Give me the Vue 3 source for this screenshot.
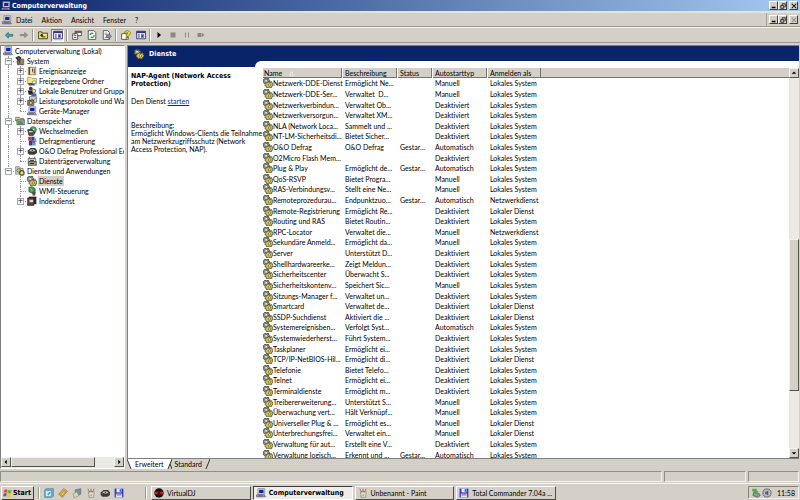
<script setup>
const menus = ['Datei', 'Aktion', 'Ansicht', 'Fenster', '?']

const tools = [
  { id: 'back', label: 'Zurück' },
  { id: 'forward', label: 'Vorwärts', sep: true },
  { id: 'up', label: 'Übergeordneter Ordner' },
  { id: 'panel', label: 'Konsolenstruktur', on: true, sep: true },
  { id: 'props', label: 'Eigenschaften' },
  { id: 'refresh', label: 'Aktualisieren' },
  { id: 'export', label: 'Liste exportieren', sep: true },
  { id: 'help', label: 'Hilfe' },
  { id: 'panel', label: 'Aktionsbereich', sep: true },
  { id: 'play', label: 'Dienst starten' },
  { id: 'stop', label: 'Dienst beenden' },
  { id: 'pause', label: 'Dienst anhalten' },
  { id: 'restart', label: 'Dienst neu starten' },
]

const tree = [
  { t: 'Computerverwaltung (Lokal)', i: 'pc', d: 0 },
  { t: 'System', i: 'tools', d: 1, b: '-' },
  { t: 'Ereignisanzeige', i: 'event', d: 2, b: '+' },
  { t: 'Freigegebene Ordner', i: 'share', d: 2, b: '+' },
  { t: 'Lokale Benutzer und Gruppe', i: 'users', d: 2, b: '+' },
  { t: 'Leistungsprotokolle und War', i: 'perf', d: 2, b: '+' },
  { t: 'Geräte-Manager', i: 'pc', d: 2, last: true },
  { t: 'Datenspeicher', i: 'store', d: 1, b: '-' },
  { t: 'Wechselmedien', i: 'media', d: 2, b: '+' },
  { t: 'Defragmentierung', i: 'defrag', d: 2 },
  { t: 'O&O Defrag Professional Ed', i: 'disk', d: 2, b: '+' },
  { t: 'Datenträgerverwaltung', i: 'drives', d: 2, last: true },
  { t: 'Dienste und Anwendungen', i: 'apps', d: 1, b: '-', end: true },
  { t: 'Dienste', i: 'gears', d: 2, sel: true, tail: true },
  { t: 'WMI-Steuerung', i: 'wmi', d: 2, tail: true },
  { t: 'Indexdienst', i: 'book', d: 2, b: '+', last: true, tail: true },
]

const columns = ['Name', 'Beschreibung', 'Status', 'Autostarttyp', 'Anmelden als']
const M = 'Manuell'
const D = 'Deaktiviert'
const A = 'Automatisch'
const S = 'Lokales System'
const L = 'Lokaler Dienst'
const N = 'Netzwerkdienst'
const G = 'Gestar...'
const services = [
  ['Netzwerk-DDE-Dienst', 'Ermöglicht Ne...', '', M, S],
  ['Netzwerk-DDE-Ser...', 'Verwaltet  D...', '', M, S],
  ['Netzwerkverbindun...', 'Verwaltet Ob...', '', D, S],
  ['Netzwerkversorgun...', 'Verwaltet XM...', '', D, S],
  ['NLA (Network Loca...', 'Sammelt und ...', '', D, S],
  ['NT-LM-Sicherheitsdi...', 'Bietet Sicher...', '', D, S],
  ['O&O Defrag', 'O&O Defrag', G, A, S],
  ['O2Micro Flash Mem...', '', '', D, S],
  ['Plug & Play', 'Ermöglicht de...', G, A, S],
  ['QoS-RSVP', 'Bietet Progra...', '', M, S],
  ['RAS-Verbindungsv...', 'Stellt eine Ne...', '', M, S],
  ['Remoteprozedurau...', 'Endpunktzuo...', G, A, N],
  ['Remote-Registrierung', 'Ermöglicht Re...', '', D, L],
  ['Routing und RAS', 'Bietet Routin...', '', D, S],
  ['RPC-Locator', 'Verwaltet die...', '', M, N],
  ['Sekundäre Anmeld...', 'Ermöglicht da...', '', M, S],
  ['Server', 'Unterstützt D...', '', D, S],
  ['Shellhardwareerke...', 'Zeigt Meldun...', '', D, S],
  ['Sicherheitscenter', 'Überwacht S...', '', D, S],
  ['Sicherheitskontenv...', 'Speichert Sic...', '', M, S],
  ['Sitzungs-Manager f...', 'Verwaltet un...', '', D, S],
  ['Smartcard', 'Verwaltet de...', '', D, L],
  ['SSDP-Suchdienst', 'Aktiviert die ...', '', D, L],
  ['Systemereignisben...', 'Verfolgt Syst...', '', A, S],
  ['Systemwiederherst...', 'Führt System...', '', D, S],
  ['Taskplaner', 'Ermöglicht ei...', '', D, S],
  ['TCP/IP-NetBIOS-Hil...', 'Ermöglicht di...', '', D, L],
  ['Telefonie', 'Bietet Telefo...', '', D, S],
  ['Telnet', 'Ermöglicht ei...', '', D, S],
  ['Terminaldienste', 'Ermöglicht m...', '', D, S],
  ['Treibererweiterung...', 'Unterstützt S...', '', M, S],
  ['Überwachung vert...', 'Hält Verknüpf...', '', M, S],
  ['Universeller Plug & ...', 'Ermöglicht es...', '', M, L],
  ['Unterbrechungsfrei...', 'Verwaltet ein...', '', M, L],
  ['Verwaltung für aut...', 'Erstellt eine V...', '', D, S],
  ['Verwaltung logisch...', 'Erkennt und ...', G, A, S],
]

const quick = [
  { i: 'desktop', label: 'Desktop anzeigen' },
  { i: 'clip', label: 'Winamp' },
  { i: 'note', label: 'Editor' },
  { i: 'paint', label: 'Paint' },
  { i: 'disk', label: 'Laufwerk' },
  { i: 'floppy', label: 'Total Commander' },
]
const tasks = [
  { i: 'vdj', t: 'VirtualDJ' },
  { i: 'pc', t: 'Computerverwaltung', on: true },
  { i: 'paint', t: 'Unbenannt - Paint' },
  { i: 'floppy', t: 'Total Commander 7.04a ...' },
]
</script>

<template>
  <svg class="defs" aria-hidden="true">
    <symbol id="pc" viewBox="0 0 16 16">
      <path d="M3 1h11v9H3z" fill="#d8d4c4" stroke="#777" />
      <path d="M5 3h7v5H5z" fill="#1020c8" />
      <path d="M1 11h12l2 3H1z" fill="#c8c4d8" stroke="#33334a" />
      <path d="M3 12.500h8" stroke="#2a2a90" />
    </symbol>
    <symbol id="tools" viewBox="0 0 16 16">
      <path d="M2 3l4-2 3 2-1 3-3 1zM5 7l7 7" fill="#555" stroke="#333" stroke-width="2" />
      <path d="M8 5h6v9H8z" fill="#98885a" stroke="#444" />
      <path d="M3 8l1 6h3V7z" fill="#777" stroke="#333" />
    </symbol>
    <symbol id="event" viewBox="0 0 16 16">
      <path d="M2 2h12v12H2z" fill="#f4e9b0" stroke="#5c5530" />
      <path d="M4 2v12" stroke="#4d4a3c" stroke-width="2" />
      <path d="M9 4v5" stroke="#b02020" stroke-width="2" />
      <path d="M9 11h2M12 4v8" stroke="#6a6a70" stroke-width="1.500" />
    </symbol>
    <symbol id="share" viewBox="0 0 16 16">
      <path d="M1 2h5l2 2h7v9H1z" fill="#f1e878" stroke="#8a8340" />
      <path d="M2 11h8l3 4H3z" fill="#3c4b9c" />
      <path d="M9 8h5v4H9z" fill="#fff" stroke="#777" />
    </symbol>
    <symbol id="users" viewBox="0 0 16 16">
      <circle cx="6" cy="4" r="3" fill="#4c402c" />
      <path d="M1 7h8l2 7H3z" fill="#222" />
      <circle cx="11" cy="8" r="3" fill="#f2d7b0" stroke="#333" />
      <path d="M7 12h8v4H7z" fill="#3c63b5" />
    </symbol>
    <symbol id="perf" viewBox="0 0 16 16">
      <path d="M4 1h11v9H4z" fill="#ddd" stroke="#444" />
      <path d="M5 8l3-4 2 3 4-4" stroke="#666" fill="none" stroke-width="1.500" />
      <path d="M1 7h10v8H1z" fill="#8a8a80" stroke="#333" />
      <circle cx="6" cy="11" r="2.500" fill="#e8e080" stroke="#222" />
    </symbol>
    <symbol id="store" viewBox="0 0 16 16">
      <path d="M1 2h6l2 2h5v4H1z" fill="#cfc88a" stroke="#555" />
      <path d="M3 6h12v8H3z" fill="#a9aaa6" stroke="#444" />
      <path d="M5 8h7v3H5z" fill="#38a058" />
      <path d="M5 12.500h8" stroke="#333" />
    </symbol>
    <symbol id="media" viewBox="0 0 16 16">
      <circle cx="10" cy="6" r="5" fill="#54b06c" stroke="#245" />
      <circle cx="10" cy="6" r="1.500" fill="#fff" />
      <path d="M1 6l7-1 5 6-3 4H3z" fill="#50504c" stroke="#222" />
      <path d="M3 9h6" stroke="#d0d0c8" stroke-width="2" />
    </symbol>
    <symbol id="defrag" viewBox="0 0 16 16">
      <path d="M2 1h5v6H2zM9 7h4v4H9z" fill="#c03b30" />
      <path d="M7 1h5v6H7zM3 7h6v8H3z" fill="#2c40a8" />
      <path d="M12 4h3v6h-3zM9 11h5v4H9z" fill="#58a4d0" />
    </symbol>
    <symbol id="disk" viewBox="0 0 16 16">
      <path d="M1 7l5-4h7l3 4v4l-4 3H4l-3-3z" fill="#3c3c3a" />
      <ellipse cx="8.500" cy="7" rx="5" ry="2.500" fill="#c4c4bc" stroke="#111" />
      <circle cx="8.500" cy="7" r="1" fill="#222" />
    </symbol>
    <symbol id="drives" viewBox="0 0 16 16">
      <path d="M3 1l2 3M13 1l-2 3M2 4h12v5H2z" fill="#ded8b4" stroke="#333" />
      <path d="M2 9h13v6H2z" fill="#9b9b90" stroke="#333" />
      <path d="M5 7h6M5 12h6" stroke="#222" stroke-width="1.500" />
    </symbol>
    <symbol id="gears" viewBox="0 0 16 16">
      <path d="M3 0h2v2h2V0h2v3l2 1v2L9 7l-1 2H6L4 8 2 9 0 7l1-2-1-2 2-1z" fill="#8e8e88" stroke="#33332f" />
      <circle cx="5" cy="4.500" r="1.500" fill="#f4f4ee" />
      <path d="M8 6h2v1h2V6h2l1 3h1v3l-2 1v2l-3 1-2-1-3 1-1-3-2-1 1-3 2-1z" fill="#c9c05a" stroke="#2f2d12" />
      <circle cx="10.500" cy="11" r="1.800" fill="#fffbd0" stroke="#4a4718" />
    </symbol>
    <symbol id="apps" viewBox="0 0 16 16">
      <path d="M1 1h6l2 3h4v9H1z" fill="#d5d3c6" stroke="#666" />
      <circle cx="6" cy="7" r="3" fill="#a8cda0" stroke="#3a5a3a" />
      <circle cx="11" cy="11" r="3.500" fill="#e0d34c" stroke="#5a5420" stroke-width="2" />
      <circle cx="11" cy="11" r="1" fill="#fff" />
    </symbol>
    <symbol id="wmi" viewBox="0 0 16 16">
      <path d="M3 2l5-1 5 3v6l-4 2-6-3z" fill="#3c9a50" stroke="#1d5030" />
      <path d="M8 8l6 2-1 5H9z" fill="#50554c" />
      <path d="M5 4l3 2v3" stroke="#c8f0c0" fill="none" />
    </symbol>
    <symbol id="book" viewBox="0 0 16 16">
      <path d="M3 1h12v12H3z" fill="#332b2d" />
      <path d="M1 3h10v12H1z" fill="#55474a" stroke="#1c1517" />
      <path d="M4 6h6v4H4z" fill="#d9d6bf" />
    </symbol>
    <symbol id="back" viewBox="0 0 16 16">
      <path d="M2 8l5-4v3h7v3H7v3z" fill="#35a9b2" stroke="#14606a" />
    </symbol>
    <symbol id="forward" viewBox="0 0 16 16">
      <path d="M14 8l-5-4v3H2v2h7v3z" fill="#999" stroke="#777" />
    </symbol>
    <symbol id="up" viewBox="0 0 16 16">
      <path d="M1 3h5l1 2h8v9H1z" fill="#f2ec7a" stroke="#45431c" stroke-width="1.500" />
      <path d="M6 7v4h6M4 9l2-3 2 3z" fill="none" stroke="#222" stroke-width="1.500" />
    </symbol>
    <symbol id="panel" viewBox="0 0 16 16">
      <path d="M1 2h14v12H1z" fill="#fff" stroke="#35357c" stroke-width="1.500" />
      <path d="M1 3.500h14" stroke="#35357c" stroke-width="3" />
      <path d="M3 6h3v7H3zM8 6h5v7H8z" fill="#8c8cc0" />
      <path d="M9 7l3 2.500L9 12z" fill="#22226a" />
    </symbol>
    <symbol id="props" viewBox="0 0 16 16">
      <path d="M5 2h10v7H5z" fill="#fff" stroke="#333" stroke-width="1.300" />
      <path d="M5 3.500h10" stroke="#444" stroke-width="2" />
      <path d="M1 6h8v9H1z" fill="#fff" stroke="#444" stroke-width="1.300" />
      <path d="M3 9h4M3 12h4M3 7l5-3" stroke="#555" stroke-width="1.500" />
    </symbol>
    <symbol id="refresh" viewBox="0 0 16 16">
      <path d="M2 1h9l3 3v11H2z" fill="#fff" stroke="#444" stroke-width="1.300" />
      <path d="M5 8a3 3 0 0 1 5-2M11 8a3 3 0 0 1-5 3" fill="none" stroke="#2c9648" stroke-width="2" />
    </symbol>
    <symbol id="export" viewBox="0 0 16 16">
      <path d="M2 1h7l3 3v11H2z" fill="#fff" stroke="#444" stroke-width="1.300" />
      <path d="M4 5h5M4 7h5M4 12h3" stroke="#666" />
      <path d="M7 8h4V6l4 4-4 4v-2H7z" fill="#8f93a8" stroke="#444" />
    </symbol>
    <symbol id="help" viewBox="0 0 16 16">
      <path d="M1 6h9v9H1z" fill="#fff" stroke="#444" stroke-width="1.300" />
      <path d="M5 5c0-5 10-5 10 0 0 3-3 3-3 5H8c0-4 3-3 3-5 0-1-2-1-2 0z" fill="#f1e83a" stroke="#55511a" />
      <path d="M8 12h4v3H8z" fill="#f1e83a" stroke="#55511a" />
    </symbol>
    <symbol id="play" viewBox="0 0 16 16"><path d="M5 2l7 6-7 6z" fill="#000" /></symbol>
    <symbol id="stop" viewBox="0 0 16 16"><path d="M3 3h10v10H3z" fill="#888" /></symbol>
    <symbol id="pause" viewBox="0 0 16 16"><path d="M4 3h2v10H4zM10 3h2v10h-2z" fill="#8c8c8c" /></symbol>
    <symbol id="restart" viewBox="0 0 16 16"><path d="M1 4h8v8H1zM10 4l5 4-5 4z" fill="#888" /></symbol>
    <symbol id="flag" viewBox="0 0 16 16">
      <path d="M2 3c2-1.500 4-1 5 0L6 8C5 7 3 7 1 8z" fill="#e0512c" />
      <path d="M8 3c2 1 4 1 6 0l-1 5c-2 1-4 1-6 0z" fill="#69b43c" />
      <path d="M1 9c2-1.500 4-1 5 0l-1 5c-1-1-3-1-5 0z" fill="#3f6fd0" />
      <path d="M7 9c2 1 4 1 6 0l-1 5c-2 1-4 1-6 0z" fill="#f3c52e" />
    </symbol>
    <symbol id="desktop" viewBox="0 0 16 16">
      <path d="M3 1h12v12l-3 2H1V4z" fill="#69a9c8" stroke="#47809c" />
      <path d="M3 5h8v8H3z" fill="#d5eef6" />
      <path d="M5 10l4-4 2 2-4 4z" fill="#5aa0bc" />
    </symbol>
    <symbol id="clip" viewBox="0 0 16 16">
      <path d="M1 10L9 1l6 4-8 10z" fill="#e2b040" stroke="#95681c" />
      <path d="M5 10l5-5 2 1-5 6z" fill="#f6e4b4" stroke="#95681c" />
    </symbol>
    <symbol id="note" viewBox="0 0 16 16">
      <path d="M5 3l9-2v9l-8 3z" fill="#6f8fa9" stroke="#526b80" />
      <path d="M2 9l6-3 3 6-5 3H3z" fill="#d9d9a8" stroke="#888860" />
    </symbol>
    <symbol id="paint" viewBox="0 0 16 16">
      <path d="M4 6h9l-1 9H5z" fill="#e5e2d0" stroke="#78756a" />
      <path d="M6 7L3 1M8 7V1M10 7l3-6" stroke="#ad6c4a" stroke-width="1.500" />
      <path d="M7 10h3v3H7z" fill="#c7a16c" />
    </symbol>
    <symbol id="floppy" viewBox="0 0 16 16">
      <path d="M1 1h14v14H1z" fill="#2738c4" />
      <path d="M4 1h8v6H4z" fill="#eef" />
      <path d="M3 9h10v6H3z" fill="#dde4f8" />
      <path d="M9 2h2v4H9z" fill="#2738c4" />
      <path d="M4 11h8" stroke="#c03848" stroke-width="1.500" />
    </symbol>
    <symbol id="vdj" viewBox="0 0 16 16">
      <circle cx="8" cy="8" r="7.500" fill="#161012" />
      <path d="M1 6h14v4H1z" fill="#cd2334" />
      <circle cx="8" cy="8" r="2.500" fill="#501018" />
    </symbol>
    <symbol id="usb" viewBox="0 0 16 16">
      <path d="M4 7l8 1 3 4-5 3-7-3z" fill="#8f9690" stroke="#4c524c" />
      <path d="M2 1h7v3l3 1-5 5-2-4-3-1z" fill="#43b53c" />
    </symbol>
    <symbol id="volume" viewBox="0 0 16 16">
      <circle cx="8" cy="8" r="6.500" fill="#b7bdc9" stroke="#636a7a" stroke-width="1.500" />
      <path d="M5 6h2l3-2v8l-3-2H5z" fill="#555d72" />
    </symbol>
    <symbol id="min" viewBox="0 0 8 8"><path d="M1 5h5v2H1z" fill="#000" /></symbol>
    <symbol id="max" viewBox="0 0 8 8">
      <path d="M3 1h4v4H6M3 1v2" fill="none" stroke="#000" />
      <path d="M1 3.500h4V7H1z" fill="none" stroke="#000" />
    </symbol>
    <symbol id="close" viewBox="0 0 8 8"><path d="M1 1l6 6M7 1L1 7" stroke="currentColor" stroke-width="1.400" /></symbol>
    <symbol id="left" viewBox="0 0 8 8"><path d="M5 1v6L2 4z" /></symbol>
    <symbol id="right" viewBox="0 0 8 8"><path d="M3 1v6l3-3z" /></symbol>
    <symbol id="upa" viewBox="0 0 8 8"><path d="M1 5h6L4 2z" /></symbol>
    <symbol id="down" viewBox="0 0 8 8"><path d="M1 3h6L4 6z" /></symbol>
  </svg>

  <div class="screen">
    <header class="title">
      <svg class="ic"><use href="#pc" /></svg>
      <h1>Computerverwaltung</h1>
      <div class="winbtns">
        <button aria-label="Minimieren"><svg><use href="#min" /></svg></button>
        <button aria-label="Wiederherstellen"><svg><use href="#max" /></svg></button>
        <button class="x" aria-label="Schließen"><svg><use href="#close" /></svg></button>
      </div>
    </header>

    <nav class="menubar">
      <svg class="ic"><use href="#pc" /></svg>
      <div class="menus"><button v-for="m in menus" :key="m">{{ m }}</button></div>
      <div class="winbtns child">
        <button aria-label="Fenster minimieren"><svg><use href="#min" /></svg></button>
        <button aria-label="Fenster wiederherstellen"><svg><use href="#max" /></svg></button>
        <button class="x off" aria-label="Fenster schließen" disabled><svg><use href="#close" /></svg></button>
      </div>
    </nav>

    <div class="toolbar">
      <template v-for="(b, k) in tools" :key="k">
        <button :class="['tool', b.id, { on: b.on }]" :aria-label="b.label"><svg><use :href="'#' + b.id" /></svg></button>
        <span v-if="b.sep" class="sep"></span>
      </template>
    </div>

    <main class="panes">
      <aside class="left">
        <ul class="tree">
          <li v-for="n in tree" :key="n.t" :class="['d' + n.d, { last: n.last, end: n.end, tail: n.tail, sel: n.sel }]">
            <span v-if="n.d === 2" class="rail"></span>
            <span v-if="n.d" class="branch"><i v-if="n.b" class="box">{{ n.b === '+' ? '+' : '−' }}</i></span>
            <svg class="ic"><use :href="'#' + n.i" /></svg>
            <span class="lbl">{{ n.t }}</span>
          </li>
        </ul>
        <div class="hscroll">
          <button class="sb" aria-label="Nach links"><svg><use href="#left" /></svg></button>
          <div class="hthumb"></div>
          <button class="sb" aria-label="Nach rechts"><svg><use href="#right" /></svg></button>
        </div>
      </aside>

      <section class="right">
        <div class="view">
          <div class="banner"><svg class="ic"><use href="#gears" /></svg><h2>Dienste</h2></div>
          <div class="step"><span></span></div>
          <div class="body">
            <div class="info">
              <h3>NAP-Agent (Network Access Protection)</h3>
              <p class="act">Den Dienst <a href="#">starten</a></p>
              <p class="desc">Beschreibung:<br />Ermöglicht Windows-Clients die Teilnahme<br />am Netzwerkzugriffsschutz (Network<br />Access Protection, NAP).</p>
            </div>
            <div class="listwrap">
              <table class="list">
                <thead>
                  <tr>
                    <th v-for="(c, k) in columns" :key="c" scope="col">{{ c }}<svg v-if="!k" class="sort" viewBox="0 0 8 8"><path d="M1 7l3-6 3 6z" fill="#c8c4bc" stroke="#fff" /></svg></th>
                    <td class="fill"></td>
                  </tr>
                </thead>
                <tbody>
                  <tr v-for="s in services" :key="s[0]">
                    <td v-for="(v, k) in s" :key="k"><svg v-if="!k" class="ic"><use href="#gears" /></svg>{{ v }}</td>
                  </tr>
                </tbody>
              </table>
              <div class="vscroll">
                <button class="sb" aria-label="Nach oben"><svg><use href="#upa" /></svg></button>
                <div class="track"><div class="vthumb"></div></div>
                <button class="sb" aria-label="Nach unten"><svg><use href="#down" /></svg></button>
              </div>
            </div>
          </div>
        </div>
        <div class="tabs">
          <svg class="edge" viewBox="0 0 5 10"><path d="M0 0l4 10h1V0z" fill="#fff" /><path d="M0 0l4 10" stroke="#333" /></svg>
          <button class="tab on">Erweitert</button>
          <svg class="edge" viewBox="0 0 5 10"><path d="M0 0h5L1 10H0z" fill="#fff" /><path d="M5 0L1 10M3 5l2 5" stroke="#333" fill="none" /></svg>
          <button class="tab">Standard</button>
          <svg class="edge" viewBox="0 0 5 10"><path d="M5 0L1 10" stroke="#333" /></svg>
        </div>
      </section>
    </main>

    <div class="status"><span></span><span></span><span></span></div>

    <footer class="taskbar">
      <button class="start"><svg><use href="#flag" /></svg>Start</button>
      <span class="sep"></span>
      <div class="quick">
        <button v-for="q in quick" :key="q.i" :aria-label="q.label"><svg><use :href="'#' + q.i" /></svg></button>
      </div>
      <span class="sep"></span>
      <div class="tasks">
        <button v-for="t in tasks" :key="t.t" :class="{ on: t.on }"><svg><use :href="'#' + t.i" /></svg><span>{{ t.t }}</span></button>
      </div>
      <div class="tray">
        <svg><use href="#usb" /></svg>
        <svg><use href="#volume" /></svg>
        <time>11:58</time>
      </div>
    </footer>
  </div>
</template>

<style>
body {
  background: #d4d0c8;
}
</style>

<style scoped>
* {
  box-sizing: border-box;
  margin: 0;
  padding: 0;
}
.defs {
  position: absolute;
  width: 0;
  height: 0;
}
.screen {
  display: flex;
  flex-direction: column;
  height: 100vh;
  overflow: hidden;
  background: #d4d0c8;
  color: #000;
  font: 7px/10px Lato, 'DejaVu Sans Condensed', sans-serif;
  font-variant-ligatures: none;
}
h1, h2, h3, .start, .tasks .on {
  font-family: 'DejaVu Sans Condensed', 'DejaVu Sans', sans-serif;
  font-size: 7px;
  font-weight: bold;
}
button {
  display: flex;
  align-items: center;
  border: 0;
  background: none;
  color: inherit;
  font: inherit;
}
svg {
  display: block;
  flex: none;
}
.ic {
  width: 10px;
  height: 10px;
}
.title {
  display: flex;
  align-items: center;
  gap: 1px;
  height: 11px;
  padding: 0 2px 0 1px;
  background: linear-gradient(90deg, #0a246a, #a6caf0);
  color: #fff;
}
.winbtns {
  display: flex;
  margin-left: auto;
}
.winbtns button {
  justify-content: center;
  width: 9px;
  height: 9px;
  background: #d4d0c8;
  border: 1px solid;
  border-color: #fff #404040 #404040 #fff;
  color: #000;
}
.winbtns svg {
  width: 6px;
  height: 6px;
}
.winbtns .x {
  margin-left: 2px;
}
.winbtns .off {
  color: #888;
}
.winbtns.child {
  align-self: stretch;
  align-items: center;
  padding: 0 2px;
  border-left: 1px solid #a5a198;
}
.menubar {
  display: flex;
  align-items: center;
  gap: 4px;
  height: 16px;
  padding-left: 2px;
  border-top: 2px solid #e6e3dd;
  border-bottom: 1px solid #9c988f;
}
.menus {
  display: flex;
  gap: 9px;
}
.toolbar {
  display: flex;
  align-items: center;
  gap: 2px;
  height: 16px;
  padding-left: 2px;
  border-top: 1px solid #f4f2ee;
  border-bottom: 1px solid #9c988f;
}
.tool {
  justify-content: center;
  width: 13px;
  height: 13px;
}
.tool svg {
  width: 10px;
  height: 10px;
}
.tool.on {
  background: #ebe9e4;
  border: 1px solid;
  border-color: #808080 #fff #fff #808080;
}
.tool.play, .tool.stop, .tool.pause, .tool.restart {
  width: 12px;
}
.tool.play svg, .tool.stop svg, .tool.pause svg, .tool.restart svg {
  width: 8px;
  height: 8px;
}
.sep {
  width: 2px;
  height: 12px;
  border-left: 1px solid #9a968c;
  border-right: 1px solid #fff;
}
.panes {
  display: flex;
  flex: 1;
  gap: 2px;
  min-height: 0;
  padding: 2px 1px 1px 0;
}
.left {
  display: flex;
  flex-direction: column;
  width: 125px;
  border: 1px solid;
  border-color: #808080 #fff #fff #808080;
  background: #fff;
}
.tree {
  flex: 1;
  overflow: hidden;
  list-style: none;
}
.tree li {
  display: flex;
  align-items: center;
  height: 10px;
  padding-left: 2px;
  white-space: nowrap;
}
.tree .ic {
  margin-right: 2px;
}
.rail, .branch {
  position: relative;
  align-self: stretch;
  flex: none;
  width: 12px;
}
.rail::before, .branch::before {
  content: '';
  position: absolute;
  inset: 0 auto 0 5px;
  border-left: 1px dotted #999;
}
.branch::after {
  content: '';
  position: absolute;
  inset: 5px 1px auto 5px;
  border-top: 1px dotted #999;
}
.tail .rail::before {
  display: none;
}
.last .branch::before, .end .branch::before {
  bottom: 5px;
}
.box {
  position: absolute;
  z-index: 1;
  inset: 2px auto auto 2px;
  display: flex;
  justify-content: center;
  width: 7px;
  height: 7px;
  border: 1px solid #a4acb8;
  background: #fff;
  font: 7px/5px 'DejaVu Sans', sans-serif;
}
.sel .lbl {
  margin-left: -1px;
  padding: 0 1px;
  background: #d4d0c8;
}
.hscroll {
  display: flex;
  height: 11px;
  background: #ebe9e4;
}
.sb, .hthumb, .vthumb {
  background: #d4d0c8;
  border: 1px solid;
  border-color: #f4f2ee #55524c #55524c #f4f2ee;
}
.sb {
  flex: none;
  justify-content: center;
  width: 10px;
  height: 10px;
}
.sb svg {
  width: 6px;
  height: 6px;
}
.hthumb {
  flex: 0 0 68%;
  height: 10px;
  margin-right: auto;
}
.right {
  display: flex;
  flex: 1;
  flex-direction: column;
  min-width: 0;
}
.view {
  display: flex;
  flex: 1;
  flex-direction: column;
  min-height: 0;
  border: 1px solid #808080;
  border-right: 0;
  background: #fff;
}
.banner {
  display: flex;
  align-items: center;
  gap: 5px;
  height: 15px;
  padding-left: 6px;
  background: #0a246a;
  color: #fff;
}
.step {
  padding-left: 127px;
  background: #0a246a;
}
.step span {
  display: block;
  height: 6px;
  border-top-left-radius: 6px;
  background: #fff;
}
.body {
  display: flex;
  flex: 1;
  min-height: 0;
}
.info {
  width: 134px;
  padding: 5px 0 0 3px;
  line-height: 8px;
}
.desc {
  white-space: nowrap;
}
.act {
  margin: 9px 0 16px;
}
a {
  color: #1717c0;
}
.listwrap {
  display: flex;
  flex: 1;
  min-width: 0;
  padding-top: 1px;
}
.list {
  display: flex;
  flex: 1;
  flex-direction: column;
  min-width: 0;
  overflow: hidden;
}
.list tr {
  display: grid;
  grid-template-columns: 80px 55px 35px 55px 54px 1fr;
}
.list th {
  display: flex;
  align-items: center;
  gap: 7px;
  padding-left: 2px;
  border-right: 1px solid #77746e;
  border-left: 1px solid #fff;
  font-weight: normal;
}
.list th:first-child {
  padding-left: 1px;
}
.list thead tr {
  height: 10px;
  background: #d4d0c8;
  border-bottom: 1px solid #77746e;
}
.sort {
  width: 5px;
  height: 5px;
}
.list tbody {
  display: grid;
  flex: 1;
  grid-auto-rows: 1fr;
  margin-bottom: -2px;
}
.list td {
  display: flex;
  align-items: center;
  padding-left: 3px;
  white-space: pre;
}
.list tbody td:first-child {
  padding-left: 1px;
}
.vscroll {
  display: flex;
  flex-direction: column;
  width: 10px;
  background: #ebe9e4;
}
.track {
  flex: 1;
  padding-top: 161px;
}
.vthumb {
  height: 152px;
}
.tabs {
  display: flex;
  height: 10px;
}
.edge {
  width: 5px;
  height: 10px;
}
.tab {
  padding: 0 3px;
}
.tab.on {
  background: #fff;
}
.status {
  display: grid;
  grid-template-columns: 1fr 82px 51px;
  gap: 2px;
  height: 13px;
  padding: 1px 1px 1px 0;
}
.status span {
  border: 1px solid;
  border-color: #928e85 #f4f2ee #f4f2ee #928e85;
}
.taskbar {
  display: flex;
  align-items: center;
  gap: 4px;
  height: 17px;
  padding: 1px 1px 0 1px;
  border-top: 1px solid #f8f7f4;
}
.taskbar svg {
  width: 10px;
  height: 10px;
}
.start {
  width: 33px;
  height: 14px;
  padding-left: 1px;
  border: 1px solid;
  border-color: #fff #404040 #404040 #fff;
}
.quick {
  display: flex;
  flex: 0 0 97px;
  gap: 4px;
}
.tasks {
  display: grid;
  flex: 0 1 405px;
  grid-template-columns: repeat(4, 1fr);
  gap: 2px;
}
.tasks button {
  gap: 3px;
  min-width: 0;
  height: 14px;
  padding-left: 2px;
  border: 1px solid;
  border-color: #fff #504d48 #504d48 #fff;
  white-space: nowrap;
}
.tasks .on {
  background: #efede9;
  border-color: #404040 #fff #fff #404040;
}
.tray {
  display: flex;
  align-items: center;
  gap: 1px;
  width: 51px;
  height: 13px;
  margin-left: auto;
  padding-left: 2px;
  border: 1px solid;
  border-color: #88857d #f4f2ee #f4f2ee #88857d;
}
.tray time {
  margin-left: 4px;
}
</style>
